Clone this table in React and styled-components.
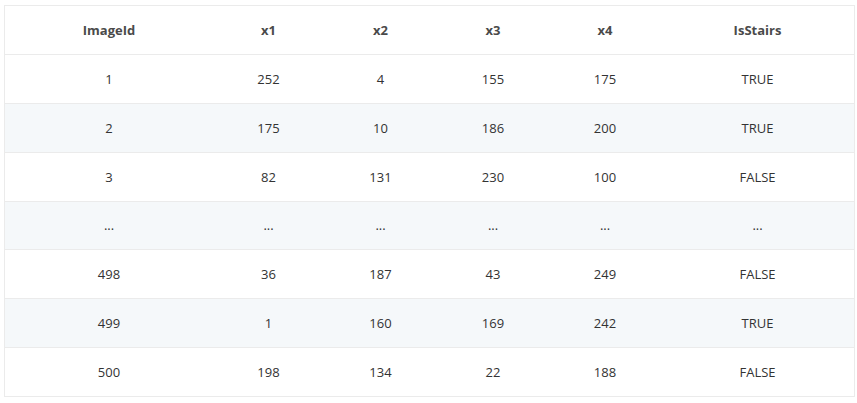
import React from "react";
import styled, { createGlobalStyle } from "styled-components";

const Global = createGlobalStyle`
  html, body { margin: 0; padding: 0; background: #fff; }
  body { font-family: "Open Sans", "Liberation Sans", sans-serif; }
`;

const Wrap = styled.div`
  padding: 5px 4px;
`;

const Table = styled.table`
  width: 849px;
  border-collapse: collapse;
  border: 1px solid #ebebeb;
  table-layout: fixed;
  font-size: 13px;
  color: #333;
`;

const Th = styled.th`
  height: 47.875px;
  padding: 0;
  font-weight: 700;
  color: #4a4a4a;
  text-align: center;
  border-bottom: 1px solid #ebebeb;
  width: ${(p) => p.$w}px;
`;

const Tr = styled.tr`
  background: ${(p) => (p.$striped ? "#f5f8fa" : "#fff")};
`;

const Td = styled.td`
  height: 47.875px;
  padding: 0;
  text-align: center;
  border-bottom: 1px solid #ebebeb;
`;

const cols = [
  ["ImageId", 208],
  ["x1", 111],
  ["x2", 113],
  ["x3", 112],
  ["x4", 112],
  ["IsStairs", 193],
];

const rows = [
  ["1", "252", "4", "155", "175", "TRUE"],
  ["2", "175", "10", "186", "200", "TRUE"],
  ["3", "82", "131", "230", "100", "FALSE"],
  ["...", "...", "...", "...", "...", "..."],
  ["498", "36", "187", "43", "249", "FALSE"],
  ["499", "1", "160", "169", "242", "TRUE"],
  ["500", "198", "134", "22", "188", "FALSE"],
];

export default function App() {
  return (
    <>
      <Global />
      <Wrap>
        <Table>
          <thead>
            <tr>
              {cols.map(([c, w]) => (
                <Th key={c} $w={w}>{c}</Th>
              ))}
            </tr>
          </thead>
          <tbody>
            {rows.map((r, i) => (
              <Tr key={i} $striped={i % 2 === 1}>
                {r.map((v, j) => (
                  <Td key={j}>{v}</Td>
                ))}
              </Tr>
            ))}
          </tbody>
        </Table>
      </Wrap>
    </>
  );
}
